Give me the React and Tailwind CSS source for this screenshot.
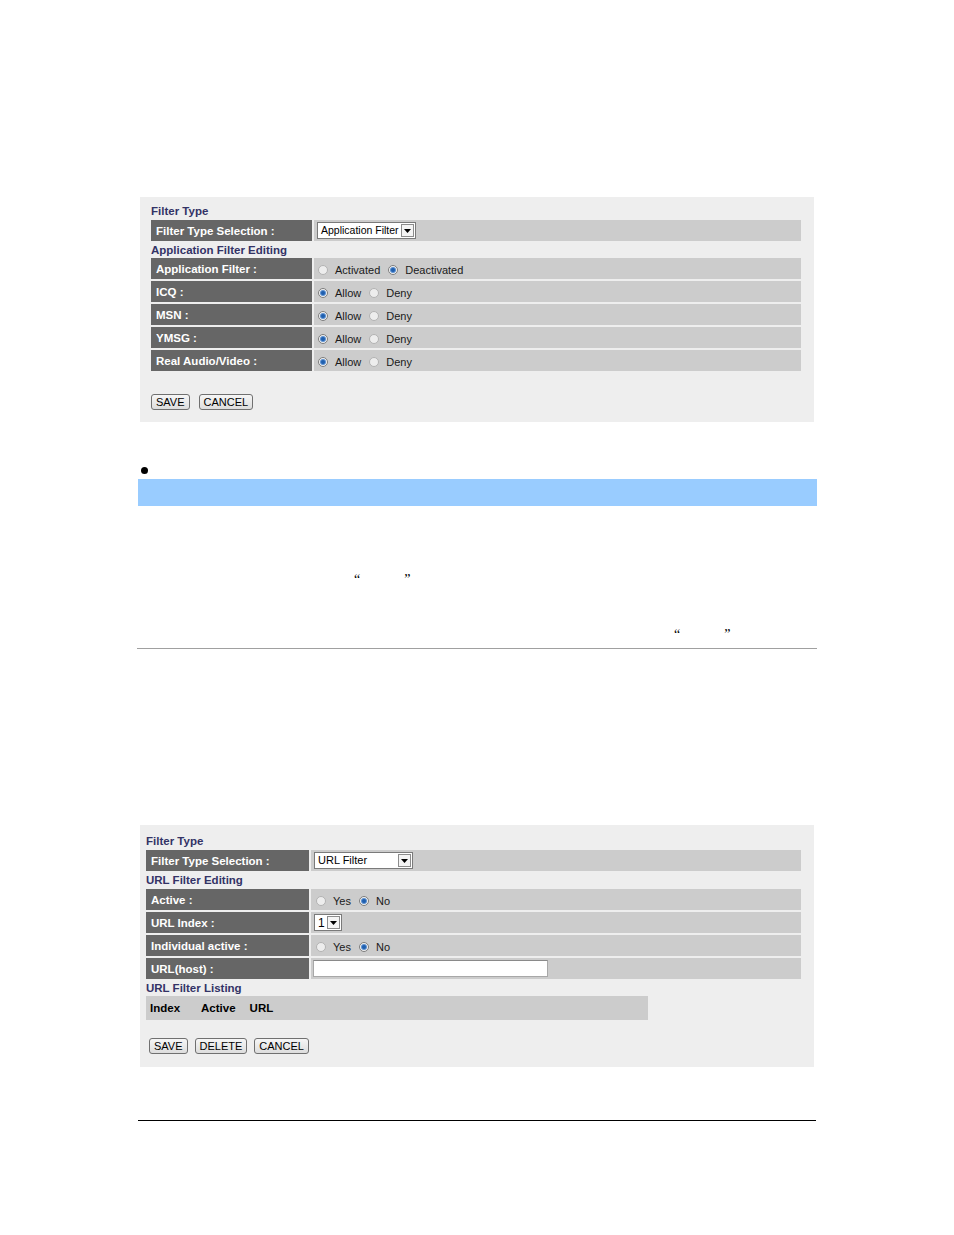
import React from 'react';

const FONT = { fontFamily: '"Liberation Sans", Arial, sans-serif' };

function Radio({ on }) {
  return (
    <span
      className={`inline-flex w-[10px] h-[10px] rounded-full border items-center justify-center shrink-0 ${
        on ? 'border-[#7d7d7d] bg-[#f2f2f2]' : 'border-[#b3b3b3] bg-[#ededed]'
      }`}
    >
      {on && <span className="w-[4px] h-[4px] rounded-full bg-[#1f5fae] ring-1 ring-[#5b8fd0]" />}
    </span>
  );
}

function Choice({ items, pl = 'pl-[4px]' }) {
  return (
    <div className={`flex items-center text-[11px] text-[#1a1a1a] pt-[3px] ${pl}`}>
      {items.map(([text, on], i) => (
        <span key={text} className={`flex items-center ${i > 0 ? 'ml-[8px]' : ''}`}>
          <Radio on={on} />
          <span className="ml-[7px]">{text}</span>
        </span>
      ))}
    </div>
  );
}

function Arrow() {
  return (
    <span className="w-[13px] h-[13px] border border-[#8c8c8c] bg-[#f4f4f4] flex items-center justify-center">
      <svg width="7" height="4" viewBox="0 0 7 4">
        <path d="M0 0h7L3.5 4z" fill="#000" />
      </svg>
    </span>
  );
}

function Select({ text, w, size = 'text-[11px]' }) {
  return (
    <div className={`ml-[3px] h-[17px] ${w} bg-white border border-[#7a7a7a] flex items-center justify-between pl-[3px] pr-[1px]`}>
      <span className={`${size} text-black leading-none`}>{text}</span>
      <Arrow />
    </div>
  );
}

function Row({ label, labelW, children }) {
  return (
    <div className="flex gap-[2px] h-[21px]">
      <div className={`${labelW} bg-[#666666] text-white font-bold text-[11.5px] pl-[5px] pt-[2px] flex items-center`}>{label}</div>
      <div className="flex-1 bg-[#cccccc] flex items-center">{children}</div>
    </div>
  );
}

function Btn({ children }) {
  return (
    <span className="h-[16px] px-[4px] border border-[#707070] rounded-[3px] bg-gradient-to-b from-[#f6f6f6] to-[#dddddd] text-[11px] text-black flex items-center leading-none">
      {children}
    </span>
  );
}

function Heading({ children, h }) {
  return <div className={`${h} flex items-center pt-[2px] text-[11.5px] font-bold text-[#333366]`}>{children}</div>;
}

function AppFilterPanel() {
  const lw = 'w-[161px]';
  const ad = [['Allow', true], ['Deny', false]];
  return (
    <div className="ml-[140px] mt-[197px] w-[674px] bg-[#eeeeee] pt-[5px] pl-[11px] pr-[13px] pb-[12px]">
      <Heading h="h-[18px]">Filter Type</Heading>
      <Row label="Filter Type Selection :" labelW={lw}>
        <Select text="Application Filter" w="w-[99px]" size="text-[10.5px]" />
      </Row>
      <Heading h="h-[17px]">Application Filter Editing</Heading>
      <div className="flex flex-col gap-[2px]">
        <Row label="Application Filter :" labelW={lw}>
          <Choice items={[['Activated', false], ['Deactivated', true]]} />
        </Row>
        <Row label="ICQ :" labelW={lw}><Choice items={ad} /></Row>
        <Row label="MSN :" labelW={lw}><Choice items={ad} /></Row>
        <Row label="YMSG :" labelW={lw}><Choice items={ad} /></Row>
        <Row label="Real Audio/Video :" labelW={lw}><Choice items={ad} /></Row>
      </div>
      <div className="mt-[23px] flex gap-[9px]">
        <Btn>SAVE</Btn>
        <Btn>CANCEL</Btn>
      </div>
    </div>
  );
}

function UrlFilterPanel() {
  const lw = 'w-[163px]';
  const yn = [['Yes', false], ['No', true]];
  return (
    <div className="ml-[140px] mt-[176px] w-[674px] bg-[#eeeeee] pt-[7px] pl-[6px] pr-[13px] pb-[13px]">
      <Heading h="h-[18px]">Filter Type</Heading>
      <Row label="Filter Type Selection :" labelW={lw}>
        <Select text="URL Filter" w="w-[99px]" />
      </Row>
      <Heading h="h-[18px]">URL Filter Editing</Heading>
      <div className="flex flex-col gap-[2px]">
        <Row label="Active :" labelW={lw}>
          <Choice items={yn} pl="pl-[5px]" />
        </Row>
        <Row label="URL Index :" labelW={lw}>
          <Select text="1" w="w-[28px]" size="text-[12px]" />
        </Row>
        <Row label="Individual active :" labelW={lw}>
          <Choice items={yn} pl="pl-[5px]" />
        </Row>
        <Row label="URL(host) :" labelW={lw}>
          <div className="ml-[2px] w-[235px] h-[17px] bg-white border border-[#a8a8a8] border-t-[#8a8a8a]" />
        </Row>
      </div>
      <Heading h="h-[17px]">URL Filter Listing</Heading>
      <div className="w-[502px] h-[24px] bg-[#cccccc] flex items-center pt-[1px] text-[11.5px] font-bold text-black pl-[4px]">
        <span>Index</span>
        <span className="ml-[21px]">Active</span>
        <span className="ml-[14px]">URL</span>
      </div>
      <div className="mt-[18px] ml-[3px] flex gap-[7px]">
        <Btn>SAVE</Btn>
        <Btn>DELETE</Btn>
        <Btn>CANCEL</Btn>
      </div>
    </div>
  );
}

export default function App() {
  return (
    <div className="w-[954px] h-[1235px] bg-white overflow-hidden" style={FONT}>
      <AppFilterPanel />

      <div className="ml-[141px] mt-[45px] w-[7px] h-[7px] rounded-full bg-black" />
      <div className="ml-[138px] mt-[5px] w-[679px] h-[27px] bg-[#99ccff]" />

      <div
        className="mt-[66px] h-[16px] flex text-[14px] leading-[16px] text-black"
        style={{ fontFamily: '"Liberation Serif", serif' }}
      >
        <span className="ml-[354px]">“</span>
        <span className="ml-[44px]">”</span>
      </div>
      <div
        className="mt-[39px] h-[16px] flex text-[14px] leading-[16px] text-black"
        style={{ fontFamily: '"Liberation Serif", serif' }}
      >
        <span className="ml-[674px]">“</span>
        <span className="ml-[44px]">”</span>
      </div>
      <div className="ml-[137px] mt-[5px] w-[680px] h-[1px] bg-[#a0a0a0]" />

      <UrlFilterPanel />

      <div className="ml-[138px] mt-[53px] w-[678px] h-[1px] bg-black" />
    </div>
  );
}
